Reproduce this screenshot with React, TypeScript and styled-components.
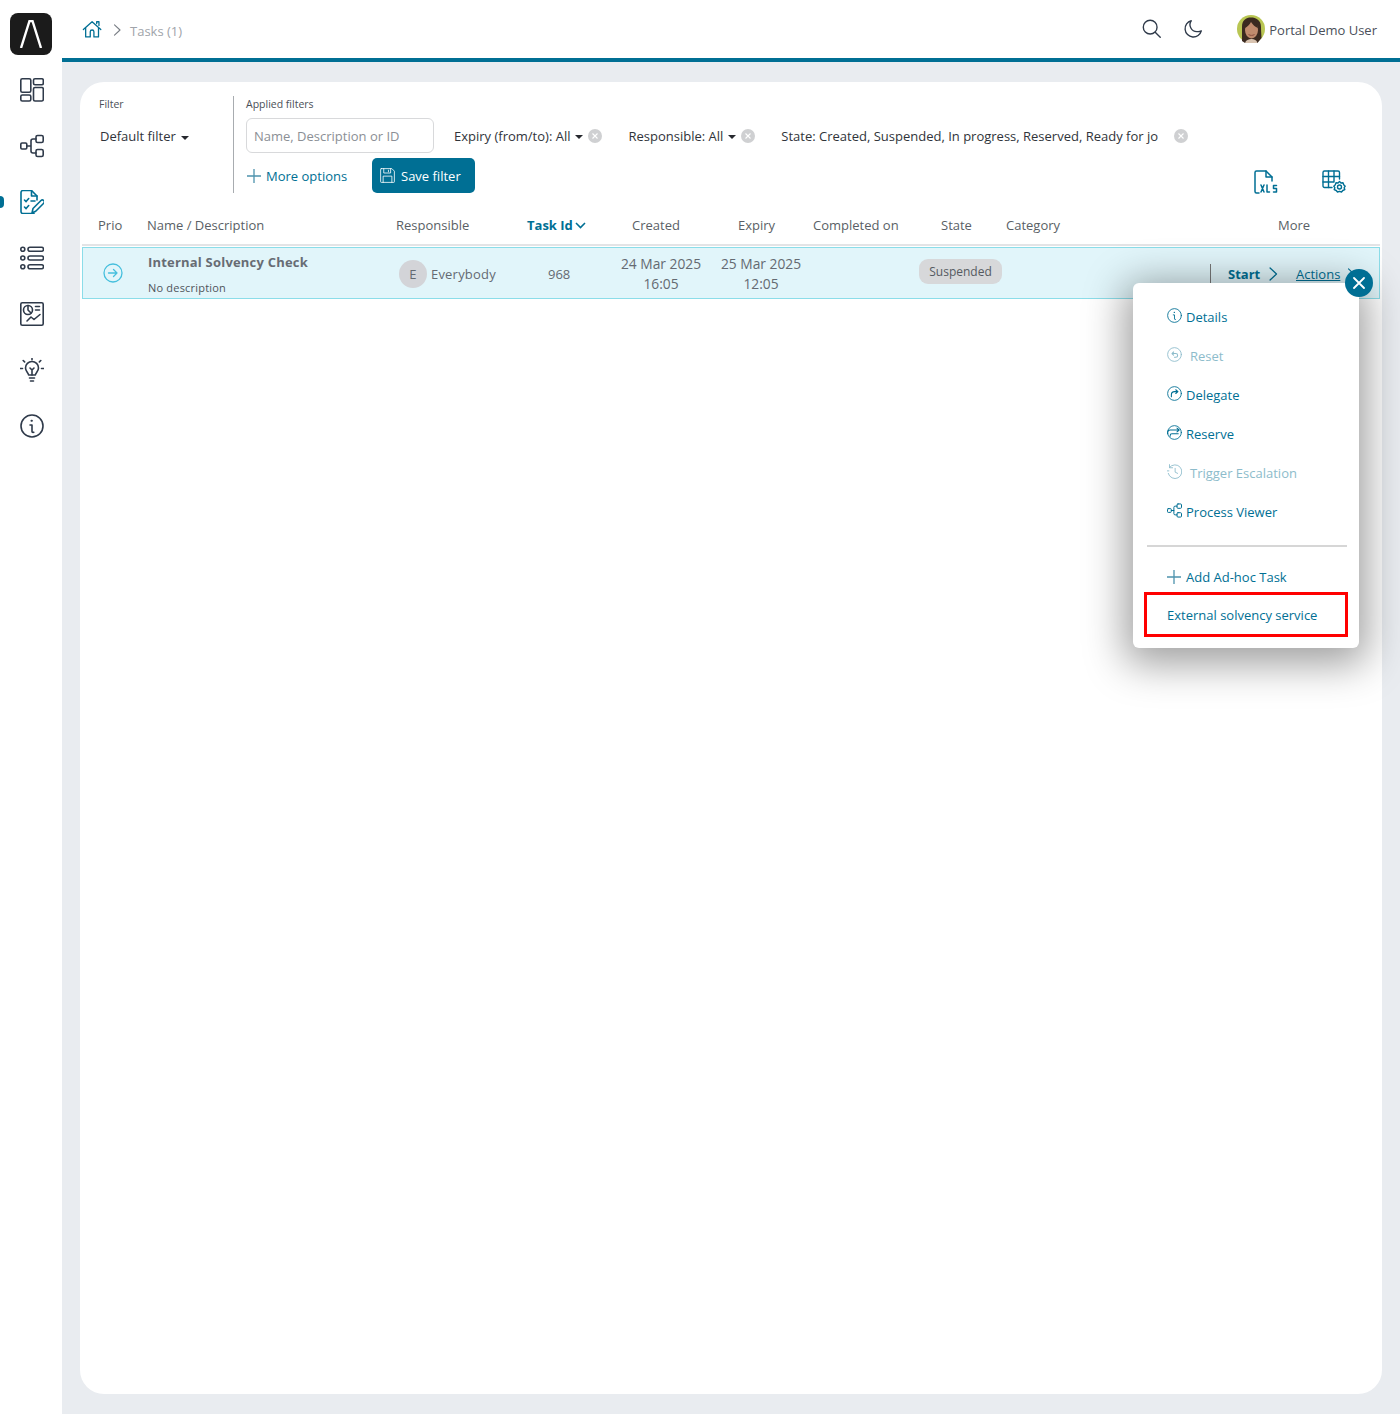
import React from "react"
import styled, { createGlobalStyle } from "styled-components"

const TEAL = "#006f94"
const INK = "#2f3a4a"

const GlobalStyle = createGlobalStyle`
  html, body { margin: 0; padding: 0; }
  body {
    background: #e9ecf0;
    font-family: "Open Sans", "Noto Sans", "Liberation Sans", sans-serif;
    font-size: 13px;
    color: #3a3f47;
  }
`

const Shell = styled.div`
  display: flex;
  min-height: 1414px;
`

const Sidebar = styled.nav`
  width: 62px;
  flex: none;
  background: #fff;
  display: flex;
  flex-direction: column;
  align-items: center;
  padding-top: 13px;
  box-sizing: border-box;
`

const Logo = styled.div`
  width: 42px;
  height: 42px;
  margin-bottom: 7px;
  border-radius: 8px;
  background: #1b1b1b;
  display: flex;
  align-items: center;
  justify-content: center;
`

const NavItem = styled.div<{ $active?: boolean }>`
  position: relative;
  width: 100%;
  height: 56px;
  box-sizing: border-box;
  padding-left: 2px;
  display: flex;
  align-items: center;
  justify-content: center;
  color: ${(p) => (p.$active ? TEAL : INK)};
  &::before {
    content: "";
    display: ${(p) => (p.$active ? "block" : "none")};
    position: absolute;
    left: 0;
    top: 22px;
    width: 4px;
    height: 12px;
    border-radius: 0 4px 4px 0;
    background: ${TEAL};
  }
`

const Content = styled.div`
  flex: 1;
  min-width: 0;
  display: flex;
  flex-direction: column;
`

const Header = styled.header`
  height: 58px;
  background: #fff;
  border-bottom: 4px solid ${TEAL};
  display: flex;
  align-items: center;
  padding: 0 23px 0 20px;
`

const Crumbs = styled.div`
  display: flex;
  align-items: center;
  gap: 7px;
  color: #a0a4aa;
  font-size: 13px;
  margin-top: 4px;
`

const HomeLink = styled.span`
  display: flex;
  color: ${TEAL};
  margin-top: -2px;
`

const CrumbSeparator = styled.span`
  display: flex;
  color: #777c83;
  margin-top: -2px;
`

const HeaderIcons = styled.div`
  margin-left: auto;
  display: flex;
  align-items: center;
  color: ${INK};
`

const IconSlot = styled.div<{ $mr: number }>`
  display: flex;
  margin-right: ${(p) => p.$mr}px;
`

const UserName = styled.span`
  font-size: 13px;
  margin: 2px 0 0 4px;
  color: #4a505a;
`

const Card = styled.main`
  flex: 1;
  margin: 20px 18px 20px 18px;
  background: #fff;
  border-radius: 24px;
  padding: 14px 2px 0;
  position: relative;
`

const FilterBar = styled.section`
  display: flex;
  height: 97px;
`

const DefaultFilter = styled.div`
  width: 134px;
  flex: none;
  border-right: 1px solid #a8acb0;
  padding-left: 17px;
`

const SmallLabel = styled.div`
  font-size: 10.5px;
  line-height: 16px;
  color: #4a4f57;
`

const FilterSelect = styled.div`
  margin-top: 7px;
  margin-left: 1px;
  line-height: 35px;
  color: #30343a;
  display: flex;
  align-items: center;
  gap: 5px;
`

const Caret = styled.span`
  display: inline-block;
  border-left: 4px solid transparent;
  border-right: 4px solid transparent;
  border-top: 4px solid #26292e;
  margin-top: 2px;
`

const Applied = styled.div`
  flex: 1;
  padding-left: 12px;
  display: flex;
  flex-direction: column;
`

const ChipsRow = styled.div`
  display: flex;
  align-items: center;
  margin-top: 6px;
  height: 35px;
`

const SearchInput = styled.input`
  width: 188px;
  height: 35px;
  box-sizing: border-box;
  border: 1px solid #d8d9db;
  border-radius: 6px;
  padding: 0 7px;
  font: inherit;
  margin-right: 20px;
  outline: none;
  &::placeholder { color: #8b8f95; opacity: 1; }
`

const Chip = styled.div<{ $mr: number; $gap?: number }>`
  display: flex;
  align-items: center;
  gap: ${(p) => p.$gap ?? 5}px;
  margin-right: ${(p) => p.$mr}px;
  color: #30343a;
  white-space: nowrap;
`

const ClearDot = styled.span`
  width: 14px;
  height: 14px;
  border-radius: 50%;
  background: #cfd0d2;
  display: flex;
  align-items: center;
  justify-content: center;
`

const ActionsRow = styled.div`
  display: flex;
  margin-top: 5px;
`

const MoreOptions = styled.div`
  display: flex;
  align-items: center;
  gap: 5px;
  width: 126px;
  padding-left: 1px;
  box-sizing: border-box;
  color: ${TEAL};
`

const SaveButton = styled.button`
  width: 103px;
  height: 35px;
  border: 0;
  border-radius: 5px;
  background: ${TEAL};
  color: #fff;
  font: inherit;
  display: flex;
  align-items: center;
  gap: 6px;
  padding: 0 8px;
`

const ToolIcons = styled.div`
  margin-left: auto;
  margin-right: 34px;
  margin-top: 12px;
  display: flex;
  gap: 44px;
  color: ${TEAL};
`

const HeadRow = styled.div`
  display: grid;
  grid-template-columns: 65px 249px 131px 105px 106px 75px 128px 65px 272px 1fr;
  align-items: center;
  height: 38px;
  margin-top: 13px;
  border-bottom: 2px solid #e3e4e6;
  color: #5a5f66;
`

const HeadCell = styled.div<{ $pad?: number; $active?: boolean }>`
  padding-left: ${(p) => p.$pad ?? 0}px;
  display: flex;
  align-items: center;
  gap: 2px;
  white-space: nowrap;
  color: ${(p) => (p.$active ? TEAL : "inherit")};
  font-weight: ${(p) => (p.$active ? 700 : 400)};
`

const TaskRow = styled.div`
  display: grid;
  grid-template-columns: 65px 249px 120px 94px 100px 100px 399px 1fr;
  align-items: center;
  height: 52px;
  box-sizing: border-box;
  margin-top: 1px;
  width: 1298px;
  background: #e1f5fa;
  border: 1px solid #8bdde9;
  color: #646a72;
`

const PrioCell = styled.div`
  padding-left: 20px;
  display: flex;
  color: #45bfdd;
`

const NameCell = styled.div`
  margin-top: 3px;
`

const TaskName = styled.div`
  font-weight: 700;
  font-size: 13px;
  line-height: 18px;
  letter-spacing: 0.2px;
  color: #676c74;
`

const TaskDesc = styled.div`
  font-size: 11px;
  line-height: 16px;
  margin-top: 9px;
  color: #4f545b;
  letter-spacing: 0.2px;
`

const ResponsibleCell = styled.div`
  display: flex;
  align-items: center;
  gap: 4px;
  padding-left: 2px;
  margin-top: 1px;
  letter-spacing: 0.2px;
`

const Initial = styled.span`
  width: 28px;
  height: 28px;
  border-radius: 50%;
  background: #d3d4d8;
  display: flex;
  align-items: center;
  justify-content: center;
`

const IdCell = styled.div`
  padding-left: 31px;
  margin-top: 2px;
`

const DateCell = styled.div`
  text-align: center;
  line-height: 20px;
  margin-top: 2px;
  font-size: 13.8px;
`

const StateCell = styled.div`
  padding-left: 108px;
  margin-top: -4px;
`

const Pill = styled.span`
  display: inline-block;
  width: 83px;
  height: 25px;
  line-height: 25px;
  border-radius: 9px;
  text-align: center;
  background: #d7d8da;
  color: #555a61;
  font-size: 12px;
`

const MoreCell = styled.div`
  display: flex;
  align-items: center;
  margin-top: 2px;
  color: ${TEAL};
`

const StartLink = styled.div`
  display: flex;
  align-items: center;
  gap: 6px;
  height: 20px;
  border-left: 1px solid #777;
  padding-left: 17px;
  width: 68px;
  font-weight: 700;
`

const ActionLink = styled.span`
  text-decoration: underline;
  white-space: nowrap;
  margin-right: 5px;
`

const Popup = styled.div`
  position: absolute;
  top: 201px;
  left: 1053px;
  width: 226px;
  height: 365px;
  box-sizing: border-box;
  padding-top: 14px;
  background: #fff;
  border-radius: 6px;
  box-shadow: 0 8px 40px 8px rgba(0, 0, 0, 0.38);
`

const CloseButton = styled.button`
  position: absolute;
  top: -14px;
  right: -14px;
  width: 28px;
  height: 28px;
  padding: 0;
  border: 0;
  border-radius: 50%;
  background: ${TEAL};
  display: flex;
  align-items: center;
  justify-content: center;
`

const MenuItem = styled.div<{ $off?: boolean; $h?: number }>`
  height: ${(p) => p.$h ?? 39}px;
  padding-left: 34px;
  display: flex;
  align-items: center;
  gap: ${(p) => (p.$off ? 8 : 4)}px;
  color: ${(p) => (p.$off ? "#8dbccb" : TEAL)};
  white-space: nowrap;
  svg { margin-top: -2px; }
`

const AddItem = styled(MenuItem)`
  gap: 5px;
  svg { margin-top: 0; }
`

const Divider = styled.hr`
  height: 2px;
  border: 0;
  background: #d6d6d6;
  margin: 14px 12px 13px 14px;
`

const Highlighted = styled.div`
  margin: -2px 11px 0;
  height: 45px;
  box-sizing: border-box;
  border: 3px solid #f00;
  padding-left: 20px;
  display: flex;
  align-items: center;
  color: ${TEAL};
`

type IconProps = { size?: number; vb?: number; sw?: number; children: React.ReactNode }

const Ico = ({ size = 24, vb = 24, sw = 1.4, children }: IconProps) => (
  <svg
    width={size}
    height={size}
    viewBox={`0 0 ${vb} ${vb}`}
    fill="none"
    stroke="currentColor"
    strokeWidth={sw}
    strokeLinecap="round"
    strokeLinejoin="round"
  >
    {children}
  </svg>
)

const DashboardIcon = () => (
  <Ico sw={1.6}>
    <rect x="0.8" y="0.8" width="10" height="13.5" rx="1.5" />
    <rect x="13.5" y="0.8" width="9.8" height="6" rx="1.5" />
    <rect x="13.5" y="9.5" width="9.8" height="13.5" rx="1.5" />
    <rect x="0.8" y="17" width="10" height="6" rx="1.5" />
  </Ico>
)

const ProcessIcon = ({ size = 24 }: { size?: number }) => (
  <Ico size={size} sw={1.6}>
    <rect x="0.8" y="9" width="6" height="6" rx="1.2" />
    <rect x="16" y="1.5" width="7.2" height="7" rx="1.6" />
    <rect x="16" y="15.5" width="7.2" height="7" rx="1.6" />
    <path d="M7 12h4m5-7h-3a2 2 0 0 0-2 2v10a2 2 0 0 0 2 2h3" />
  </Ico>
)

const TaskIcon = () => (
  <Ico sw={1.6}>
    <path d="M17 10V6l-5.5-5.500H3A2 2 0 0 0 1 2.500v19a2 2 0 0 0 2 2h11" />
    <path d="M11.500 .8V6H17" />
    <path d="M4.500 10l1.600 1.600 2.600-3M4.500 17l1.600 1.600 2.600-3M11 11h4" />
    <path d="M12 23l1-4.500 8-8a1.900 1.900 0 0 1 2.700 2.700l-8 8z" />
  </Ico>
)

const ListIcon = () => (
  <Ico sw={1.6}>
    <circle cx="2.800" cy="3.200" r="2" />
    <circle cx="2.800" cy="12" r="2" />
    <circle cx="2.800" cy="20.800" r="2" />
    <rect x="8" y="1.200" width="15.500" height="4" rx="2" />
    <rect x="8" y="10" width="15.500" height="4" rx="2" />
    <rect x="8" y="18.800" width="15.500" height="4" rx="2" />
  </Ico>
)

const ReportIcon = () => (
  <Ico sw={1.6}>
    <rect x="0.8" y="0.8" width="22.400" height="22.400" rx="1.500" />
    <circle cx="8" cy="8" r="4.500" />
    <path d="M8 3.500V8l3 3M15.500 4.500h4M15.500 8h4M7 19l4-4 3 2.500 6-5" />
  </Ico>
)

const BulbIcon = () => (
  <Ico sw={1.6}>
    <path d="M8.600 17c0-2-3.100-3.500-3.100-7a6.500 6.500 0 0 1 13 0c0 3.500-3.100 5-3.100 7z" />
    <path d="M9.500 20h5M10.500 23h3M12 17v-5l-2-2m2 2l2-2" />
    <path d="M12 .5v1.200M3.200 2.500l1.400 1.400M20.800 2.500l-1.400 1.400M.5 10.500H2.500M21.500 10.500h2" />
  </Ico>
)

const InfoIcon = ({ size = 24, sw = 1.6 }: { size?: number; sw?: number }) => (
  <Ico size={size} sw={sw}>
    <circle cx="12" cy="12" r="11" />
    <path d="M10 11h2v6.500c0 .8.600 1 1.800.8" />
    <path d="M11.500 6.800h.4" strokeWidth={2} />
  </Ico>
)

const HomeIcon = () => (
  <Ico size={22} sw={1.4}>
    <path d="M1.500 11.500L11 3l9.500 8.500M16 5V3h2.500v4" />
    <path d="M4 10v9.500h5V14a2 2 0 0 1 4 0v5.500h5V10" />
  </Ico>
)

const ChevronRight = ({ size = 12 }: { size?: number }) => (
  <Ico size={size} vb={12} sw={1.1}>
    <path d="M3.500 .8L9 6l-5.500 5.200" />
  </Ico>
)

const XlsIcon = () => (
  <Ico size={24} sw={1.5}>
    <path d="M5 23H2.500A1.500 1.500 0 0 1 1 21.500v-19A1.500 1.500 0 0 1 2.500 1H12l6 6v4" />
    <path d="M12 1v6h6" />
    <path d="M7 15l3 7m0-7l-3 7M13 15v7h2.500M22.500 15.500h-3v3h3v3.500h-3" />
  </Ico>
)

const TableGearIcon = () => (
  <Ico size={24} sw={1.4}>
    <path d="M10 17.500H2.500A1.500 1.500 0 0 1 1 16V2.500A1.500 1.500 0 0 1 2.500 1h13.500A1.500 1.500 0 0 1 17.500 2.500V9" />
    <path d="M1 6.500h16.500M1 12h11M6.500 1v16.500M12 1v11" />
    <circle cx="17.500" cy="17" r="2" />
    <path d="M17.500 11.500l1.500 1.500 2-.3 .7 2 1.500 1.500-1 1.500 .6 2-2 .8-1.300 1.500-2-.7-2 .7-1.300-1.500-2-.8.6-2-1-1.500 1.500-1.500.7-2 2 .3z" />
  </Ico>
)

const SaveIcon = () => (
  <Ico size={15} sw={1.3}>
    <path d="M2 1h17l4 4v17a1 1 0 0 1-1 1H2a1 1 0 0 1-1-1V2a1 1 0 0 1 1-1z" />
    <path d="M6 1v7h11V1M5 23v-10h14v10M13.500 3.500v2.500" />
  </Ico>
)

const ClearIcon = () => (
  <svg width="6" height="6" viewBox="0 0 6 6" stroke="#fff" strokeWidth="1.100">
    <path d="M.5 .5l5 5m0-5l-5 5" />
  </svg>
)

const Plus = ({ size = 14 }: { size?: number }) => (
  <svg width={size} height={size} viewBox="0 0 14 14" stroke="#4d93ad" strokeWidth="1.300">
    <path d="M7 0v14M0 7h14" />
  </svg>
)

const ArrowCircle = () => (
  <Ico size={20} vb={20} sw={1.300}>
    <circle cx="10" cy="10" r="9" />
    <path d="M5.500 10h8.500M10.500 6.500L14 10l-3.500 3.500" />
  </Ico>
)

const Avatar = () => (
  <svg width="28" height="28" viewBox="0 0 28 28">
    <circle cx="14" cy="14" r="14" fill="#b9c653" />
    <path d="M5 26V12C5 5 9 2.500 14 2.500S24 5 24 12c0 5 .5 9 .5 11l-4 5H8z" fill="#3b2a20" />
    <ellipse cx="14.500" cy="15" rx="6.500" ry="8.500" fill="#c08b6d" />
    <path d="M8 13c2-1 5-4 6-6 2 3 4 5 7 6-.5-5-3-8-7-8s-6.500 3-6 8z" fill="#3b2a20" />
    <path d="M8 28c1-3 3.500-4 6.500-4s5 1 6 4z" fill="#d8c3b0" />
    <path d="M11.500 19.500c2 1.200 4 1.200 6 0" stroke="#8d4f40" strokeWidth="1" fill="none" />
  </svg>
)

const MenuInfo = () => <InfoIcon size={15} sw={1.4} />

const ResetIcon = () => (
  <Ico size={15} sw={1.4}>
    <circle cx="12" cy="12" r="11" />
    <path d="M8 10.500h6a3 3 0 0 1 0 6h-2M8 10.500l2.500-2.500M8 10.500l2.500 2.500" strokeWidth={1.7} />
  </Ico>
)

const DelegateIcon = () => (
  <Ico size={15} sw={1.4}>
    <circle cx="12" cy="12" r="11" />
    <path d="M7 17v-3a5 5 0 0 1 5-5h5M14 6l3.500 3L14 12" strokeWidth={1.7} />
  </Ico>
)

const ReserveIcon = () => (
  <Ico size={15} sw={1.4}>
    <circle cx="12" cy="12" r="11" />
    <path d="M1 14v-2a4 4 0 0 1 4-4h14M16 5l3.500 3-3.500 3M5 18v-1a3 3 0 0 1 3-3h10" strokeWidth={1.7} />
  </Ico>
)

const HistoryIcon = () => (
  <Ico size={15} sw={1.4}>
    <path d="M4 5.500A11 11 0 1 1 2 15" />
    <path d="M4 1v5h5M13 7v6l4 2M0 11h3" />
  </Ico>
)

export default function App() {
  return (
    <>
      <GlobalStyle />
      <Shell>
        <Sidebar>
          <Logo>
            <svg width="24" height="28" viewBox="0 0 24 28" fill="none" stroke="#fff" strokeWidth="2.400">
              <path d="M2 28L10.500 1h3L22 28" />
            </svg>
          </Logo>
          <NavItem><DashboardIcon /></NavItem>
          <NavItem><ProcessIcon /></NavItem>
          <NavItem $active><TaskIcon /></NavItem>
          <NavItem><ListIcon /></NavItem>
          <NavItem><ReportIcon /></NavItem>
          <NavItem><BulbIcon /></NavItem>
          <NavItem><InfoIcon /></NavItem>
        </Sidebar>
        <Content>
          <Header>
            <Crumbs>
              <HomeLink><HomeIcon /></HomeLink>
              <CrumbSeparator><ChevronRight /></CrumbSeparator>
              Tasks (1)
            </Crumbs>
            <HeaderIcons>
              <IconSlot $mr={20}>
                <Ico size={22} sw={1.5}>
                  <circle cx="10" cy="10" r="7.500" />
                  <path d="M15.500 15.500L21 21" />
                </Ico>
              </IconSlot>
              <IconSlot $mr={32}>
                <Ico size={22} sw={1.5}>
                  <path d="M9 3a9 9 0 1 0 11 11c-1.500 .8-3 1-4.500 .8A7.500 7.500 0 0 1 9 3z" />
                </Ico>
              </IconSlot>
              <IconSlot $mr={0}><Avatar /></IconSlot>
              <UserName>Portal Demo User</UserName>
            </HeaderIcons>
          </Header>
          <Card>
            <FilterBar>
              <DefaultFilter>
                <SmallLabel>Filter</SmallLabel>
                <FilterSelect>Default filter <Caret /></FilterSelect>
              </DefaultFilter>
              <Applied>
                <SmallLabel>Applied filters</SmallLabel>
                <ChipsRow>
                  <SearchInput placeholder="Name, Description or ID" />
                  <Chip $mr={26}>
                    Expiry (from/to): All <Caret /> <ClearDot><ClearIcon /></ClearDot>
                  </Chip>
                  <Chip $mr={26}>
                    Responsible: All <Caret /> <ClearDot><ClearIcon /></ClearDot>
                  </Chip>
                  <Chip $mr={0} $gap={16}>
                    State: Created, Suspended, In progress, Reserved, Ready for jo
                    <ClearDot><ClearIcon /></ClearDot>
                  </Chip>
                </ChipsRow>
                <ActionsRow>
                  <MoreOptions><Plus /> More options</MoreOptions>
                  <SaveButton><SaveIcon /> Save filter</SaveButton>
                  <ToolIcons>
                    <XlsIcon />
                    <TableGearIcon />
                  </ToolIcons>
                </ActionsRow>
              </Applied>
            </FilterBar>
            <HeadRow>
              <HeadCell $pad={16}>Prio</HeadCell>
              <HeadCell>Name / Description</HeadCell>
              <HeadCell>Responsible</HeadCell>
              <HeadCell $active>
                Task Id
                <svg width="11" height="7" viewBox="0 0 11 7" fill="none" stroke={TEAL} strokeWidth="1.600">
                  <path d="M1 1l4.500 4.500L10 1" />
                </svg>
              </HeadCell>
              <HeadCell>Created</HeadCell>
              <HeadCell>Expiry</HeadCell>
              <HeadCell>Completed on</HeadCell>
              <HeadCell>State</HeadCell>
              <HeadCell>Category</HeadCell>
              <HeadCell>More</HeadCell>
            </HeadRow>
            <TaskRow>
              <PrioCell><ArrowCircle /></PrioCell>
              <NameCell>
                <TaskName>Internal Solvency Check</TaskName>
                <TaskDesc>No description</TaskDesc>
              </NameCell>
              <ResponsibleCell><Initial>E</Initial> Everybody</ResponsibleCell>
              <IdCell>968</IdCell>
              <DateCell>24 Mar 2025<br />16:05</DateCell>
              <DateCell>25 Mar 2025<br />12:05</DateCell>
              <StateCell><Pill>Suspended</Pill></StateCell>
              <MoreCell>
                <StartLink>Start <ChevronRight size={14} /></StartLink>
                <ActionLink>Actions</ActionLink>
                <ChevronRight size={12} />
              </MoreCell>
            </TaskRow>
            <Popup>
              <CloseButton aria-label="Close">
                <svg width="12" height="12" viewBox="0 0 12 12" stroke="#fff" strokeWidth="1.800" strokeLinecap="round">
                  <path d="M1 1l10 10M11 1L1 11" />
                </svg>
              </CloseButton>
              <MenuItem><MenuInfo /> Details</MenuItem>
              <MenuItem $off><ResetIcon /> Reset</MenuItem>
              <MenuItem><DelegateIcon /> Delegate</MenuItem>
              <MenuItem><ReserveIcon /> Reserve</MenuItem>
              <MenuItem $off><HistoryIcon /> Trigger Escalation</MenuItem>
              <MenuItem><ProcessIcon size={15} /> Process Viewer</MenuItem>
              <Divider />
              <AddItem $h={34}><Plus /> Add Ad-hoc Task</AddItem>
              <Highlighted>External solvency service</Highlighted>
            </Popup>
          </Card>
        </Content>
      </Shell>
    </>
  )
}
